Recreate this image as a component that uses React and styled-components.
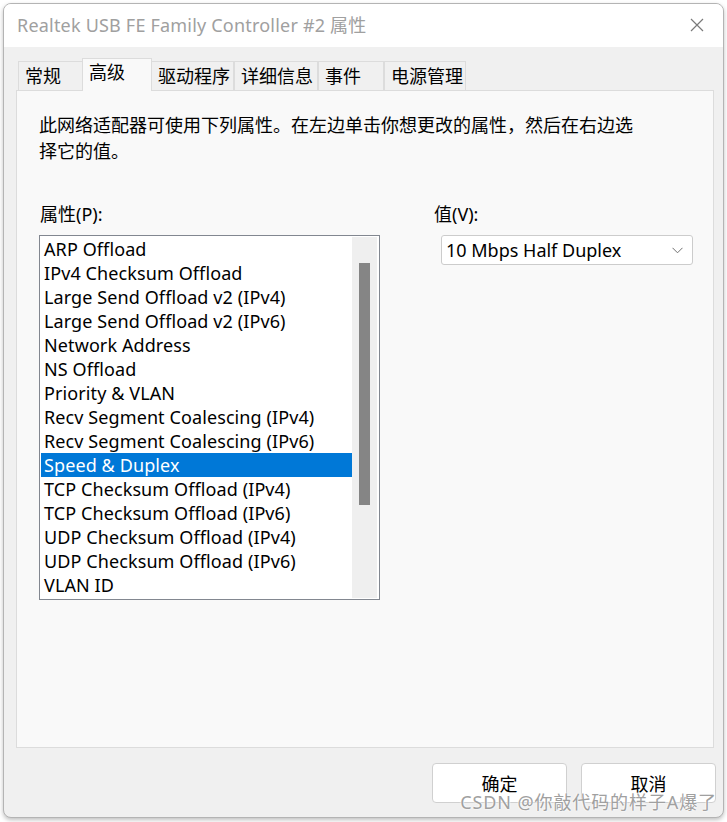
import React, { useState } from "react";
import styled, { createGlobalStyle } from "styled-components";

const GlobalStyle = createGlobalStyle`
  html, body {
    margin: 0;
    padding: 0;
    background: #ffffff;
  }
  body {
    font-family: "Segoe UI", "Noto Sans", "Noto Sans CJK SC", sans-serif;
  }
`;

const Page = styled.div`
  width: 727px;
  height: 822px;
  padding: 3px 3px 4px 3px;
  box-sizing: border-box;
  position: relative;
  overflow: hidden;
`;

const Window = styled.div`
  height: 815px;
  display: flex;
  flex-direction: column;
  border: 1px solid #b4b4b4;
  border-radius: 8px;
  overflow: hidden;
  background: #f0f0f0;
  box-shadow: 0 2px 4px rgba(0, 0, 0, 0.25);
  box-sizing: border-box;
`;

const TitleBar = styled.div`
  height: 43px;
  flex-shrink: 0;
  display: flex;
  align-items: center;
  justify-content: space-between;
  background: #ffffff;
  padding: 0 18px 4px 13px;
  box-sizing: border-box;
`;

const Title = styled.div`
  font-size: 18px;
  color: #a0a0a0;
  letter-spacing: 0.2px;
`;

const CloseButton = styled.div`
  width: 16px;
  height: 16px;
  display: flex;
  align-items: center;
  justify-content: center;
  margin-top: 2px;
`;

const Body = styled.div`
  flex: 1;
  display: flex;
  flex-direction: column;
  padding: 12px 9px 0 12px;
`;

const TabStrip = styled.div`
  display: flex;
  align-items: flex-end;
  height: 32px;
  padding-left: 2px;
  margin-bottom: -1px;
  position: relative;
  z-index: 1;
`;

const Tab = styled.div`
  height: ${({ $active }) => ($active ? "33px" : "30px")};
  width: ${({ $w }) => $w}px;
  box-sizing: border-box;
  border: 1px solid #dcdcdc;
  border-bottom: ${({ $active }) => ($active ? "none" : "1px solid #dcdcdc")};
  background: ${({ $active }) => ($active ? "#f9f9f9" : "#f0f0f0")};
  margin-left: ${({ $active }) => ($active ? "-1px" : "0")};
  margin-right: ${({ $active }) => ($active ? "-1px" : "0")};
  font-size: 18px;
  color: #000;
  padding: ${({ $active }) => ($active ? "1px 0 0 6px" : "2px 0 0 6px")};
  white-space: nowrap;
  overflow: hidden;
  line-height: 24px;
`;

const Panel = styled.div`
  height: 658px;
  box-sizing: border-box;
  background: #f9f9f9;
  border: 1px solid #dcdcdc;
  padding: 21px 24px 0 22px;
`;

const Description = styled.p`
  margin: 0;
  font-size: 18px;
  line-height: 26px;
  width: 600px;
  color: #000;
`;

const Columns = styled.div`
  display: flex;
  margin-top: 38px;
  gap: 54px;
`;

const Column = styled.div`
  display: flex;
  flex-direction: column;
`;

const FieldLabel = styled.div`
  font-size: 18px;
  line-height: 24px;
  height: 24px;
  margin-left: ${({ $shift }) => $shift || 0}px;
  margin-bottom: 9px;
  color: #000;
`;

const ListBox = styled.div`
  width: 341px;
  height: 365px;
  box-sizing: border-box;
  border: 1px solid #828790;
  background: #ffffff;
  display: flex;
  padding: 1px;
`;

const Items = styled.div`
  flex: 1;
  display: flex;
  flex-direction: column;
  overflow: hidden;
`;

const Item = styled.div`
  height: 24px;
  line-height: 24px;
  font-size: 18px;
  padding-left: 3px;
  white-space: nowrap;
  letter-spacing: 0.1px;
  color: ${({ $selected }) => ($selected ? "#ffffff" : "#000000")};
  background: ${({ $selected }) => ($selected ? "#0078d7" : "transparent")};
`;

const ScrollTrack = styled.div`
  width: 25px;
  background: #efefef;
  display: flex;
  justify-content: center;
  padding-top: 26px;
  box-sizing: border-box;
  margin-right: 1px;
`;

const ScrollThumb = styled.div`
  width: 11px;
  height: 242px;
  background: #858585;
`;

const Select = styled.div`
  width: 252px;
  height: 30px;
  box-sizing: border-box;
  border: 1px solid #cccccc;
  border-radius: 3px;
  background: #ffffff;
  display: flex;
  align-items: center;
  justify-content: space-between;
  padding: 0 9px 0 4px;
  margin-left: 7px;
  font-size: 18px;
  color: #000;
`;

const Footer = styled.div`
  display: flex;
  justify-content: flex-end;
  gap: 14px;
  padding: 15px 0 0 0;
  margin-right: -2px;
`;

const Button = styled.div`
  width: 135px;
  height: 40px;
  box-sizing: border-box;
  border: 1px solid #d0d0d0;
  border-radius: 4px;
  background: #ffffff;
  display: flex;
  align-items: center;
  justify-content: center;
  font-size: 18px;
  color: #000;
`;

const Watermark = styled.div`
  position: absolute;
  right: 10px;
  bottom: 8px;
  font-family: "Noto Sans", "Noto Sans CJK SC", sans-serif;
  font-size: 18px;
  line-height: 24px;
  letter-spacing: 0.9px;
  color: #a0a0a0;
  text-shadow: 0 0 2px #ffffff, 0 0 2px #ffffff;
  white-space: nowrap;
`;

const tabs = [
  { label: "常规", w: 65 },
  { label: "高级", w: 70 },
  { label: "驱动程序", w: 83 },
  { label: "详细信息", w: 84 },
  { label: "事件", w: 66 },
  { label: "电源管理", w: 82 },
];

const properties = [
  "ARP Offload",
  "IPv4 Checksum Offload",
  "Large Send Offload v2 (IPv4)",
  "Large Send Offload v2 (IPv6)",
  "Network Address",
  "NS Offload",
  "Priority & VLAN",
  "Recv Segment Coalescing (IPv4)",
  "Recv Segment Coalescing (IPv6)",
  "Speed & Duplex",
  "TCP Checksum Offload (IPv4)",
  "TCP Checksum Offload (IPv6)",
  "UDP Checksum Offload (IPv4)",
  "UDP Checksum Offload (IPv6)",
  "VLAN ID",
];

const App = () => {
  const [selected, setSelected] = useState("Speed & Duplex");

  return (
    <Page>
      <GlobalStyle />
      <Window>
        <TitleBar>
          <Title>Realtek USB FE Family Controller #2 属性</Title>
          <CloseButton>
            <svg width="14" height="14" viewBox="0 0 14 14">
              <path d="M1 1 L13 13 M13 1 L1 13" stroke="#7a7a7a" strokeWidth="1.2" fill="none" />
            </svg>
          </CloseButton>
        </TitleBar>
        <Body>
          <TabStrip>
            {tabs.map((t) => (
              <Tab key={t.label} $w={t.w} $active={t.label === "高级"}>
                {t.label}
              </Tab>
            ))}
          </TabStrip>
          <Panel>
            <Description>
              此网络适配器可使用下列属性。在左边单击你想更改的属性，然后在右边选择它的值。
            </Description>
            <Columns>
              <Column>
                <FieldLabel $shift={1}>属性(P):</FieldLabel>
                <ListBox>
                  <Items>
                    {properties.map((p) => (
                      <Item key={p} $selected={p === selected} onClick={() => setSelected(p)}>
                        {p}
                      </Item>
                    ))}
                  </Items>
                  <ScrollTrack>
                    <ScrollThumb />
                  </ScrollTrack>
                </ListBox>
              </Column>
              <Column>
                <FieldLabel>值(V):</FieldLabel>
                <Select>
                  <span>10 Mbps Half Duplex</span>
                  <svg width="11" height="7" viewBox="0 0 11 7">
                    <path d="M0.5 0.8 L5.5 5.8 L10.5 0.8" stroke="#6f6f6f" strokeWidth="1" fill="none" />
                  </svg>
                </Select>
              </Column>
            </Columns>
          </Panel>
          <Footer>
            <Button>确定</Button>
            <Button>取消</Button>
          </Footer>
        </Body>
      </Window>
      <Watermark>CSDN @你敲代码的样子A爆了</Watermark>
    </Page>
  );
};

export default App;
